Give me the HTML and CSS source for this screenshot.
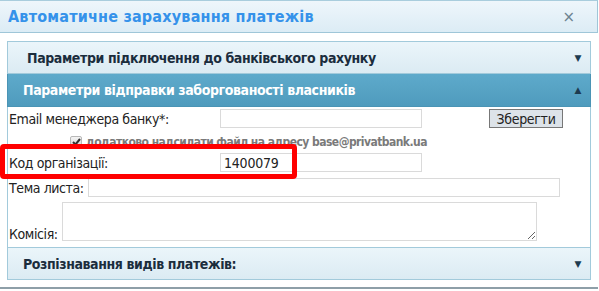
FILE: index.html
```html
<!DOCTYPE html>
<html lang="uk">
<head>
  <meta charset="UTF-8" />
  <title>Автоматичне зарахування платежів</title>
  <link rel="stylesheet" href="styles.css">
</head>
<body>
  <div class="dialog">
    <div class="dialog-title">
      <span class="dialog-title-text">Автоматичне зарахування платежів</span>
      <span class="dialog-close">&times;</span>
    </div>
    <div class="accordion">
      <div class="acc-header acc-header-first">
        <span>Параметри підключення до банківського рахунку</span>
        <span class="acc-arrow">&#9660;</span>
      </div>
      <div class="acc-header acc-header-active">
        <span>Параметри відправки заборгованості власників</span>
        <span class="acc-arrow">&#9650;</span>
      </div>
      <div class="acc-content">
        <div class="form-row row-email">
          <label class="form-label label-wide">Email менеджера банку*:</label>
          <input class="text-input input-short" type="text" />
          <button class="save-btn">Зберегти</button>
        </div>
        <div class="form-row row-check">
          <span class="fake-check">
            <svg width="9" height="8" viewBox="0 0 9 8"><path d="M1 4 L3.5 6.5 L8 1" stroke="#333" stroke-width="2" fill="none"/></svg>
          </span>
          <span class="check-text">додатково надсилати файл на адресу base@privatbank.ua</span>
        </div>
        <div class="form-row row-code">
          <label class="form-label label-wide">Код організації:</label>
          <input class="text-input input-short" type="text" value="1400079" />
        </div>
        <div class="form-row row-subject">
          <label class="form-label">Тема листа:</label>
          <input class="text-input input-subject" type="text" />
        </div>
        <div class="form-row row-fee">
          <label class="form-label">Комісія:</label>
          <textarea class="text-area"></textarea>
        </div>
      </div>
      <div class="acc-header">
        <span>Розпізнавання видів платежів:</span>
        <span class="acc-arrow">&#9660;</span>
      </div>
    </div>
    <div class="highlight-box"></div>
  </div>
</body>
</html>
```

FILE: styles.css
```css
body {
  margin: 0;
  background: #fff;
  font-family: 'DejaVu Sans Condensed', 'DejaVu Sans', sans-serif;
}
.dialog {
  position: relative;
  width: 598px;
  height: 287px;
  border-bottom: 2px solid #8e9fa8;
  background: #fff;
}
.dialog-title {
  display: flex;
  align-items: center;
  justify-content: space-between;
  height: 31px;
  border-top: 1px solid #a9cddd;
  border-bottom: 1px solid #9fc6d8;
  border-right: 1px solid #9fc6d8;
  background: linear-gradient(to bottom, #eef6fb 0%, #dcecf5 100%);
  padding: 0 22px 0 8px;
}
.dialog-title-text {
  font-size: 16px;
  font-weight: bold;
  letter-spacing: 0.2px;
  color: #3592ea;
}
.dialog-close {
  font-family: 'DejaVu Sans', sans-serif;
  font-size: 15px;
  color: #6d8391;
}
.accordion {
  margin: 8px 0 0 7px;
  width: 584px;
}
.acc-header {
  display: flex;
  align-items: center;
  justify-content: space-between;
  height: 31px;
  padding: 0 9px 0 15px;
  border: 1px solid #a2cadb;
  background: linear-gradient(to bottom, #ebf5fa 0%, #dbebf3 100%);
  font-size: 14px;
  font-weight: bold;
  letter-spacing: -0.4px;
  color: #1b2d3d;
}
.acc-header-first {
  padding-left: 19px;
}
.acc-header-active {
  border-top: 0;
  height: 32px;
  background: linear-gradient(to bottom, #5eaacb 0%, #4f9bbd 100%);
  border-color: #4a94b5;
  color: #fff;
}
.acc-arrow {
  font-family: 'DejaVu Sans', sans-serif;
  font-size: 9px;
  color: #1d3b50;
}
.acc-content {
  height: 140px;
  padding: 2px 0 0 1px;
  box-sizing: border-box;
  border-left: 1px solid #a2cadb;
  border-right: 1px solid #a2cadb;
  background: #fff;
}
.form-row {
  display: flex;
  align-items: center;
}
.form-label {
  font-size: 14px;
  letter-spacing: -0.4px;
  color: #222;
  white-space: nowrap;
  margin-right: 4px;
}
.label-wide {
  width: 207px;
}
.text-input {
  height: 19px;
  box-sizing: border-box;
  border: 1px solid #dadada;
  padding: 0 3px;
  font-family: 'DejaVu Sans Condensed', 'DejaVu Sans', sans-serif;
  font-size: 14px;
  letter-spacing: -0.2px;
  color: #222;
  outline: none;
}
.input-short {
  width: 202px;
}
.input-subject {
  width: 472px;
}
.save-btn {
  margin-left: 67px;
  width: 74px;
  height: 19px;
  padding: 0;
  border: 1px solid #777;
  border-radius: 0;
  background: #dde3e9;
  font-family: 'DejaVu Sans Condensed', 'DejaVu Sans', sans-serif;
  font-size: 14px;
  letter-spacing: -0.3px;
  color: #222;
}
.row-check {
  height: 25px;
  padding-left: 61px;
  padding-top: 2px;
  box-sizing: border-box;
}
.fake-check {
  display: flex;
  align-items: center;
  justify-content: center;
  width: 10px;
  height: 10px;
  border: 1px solid #b8b8b8;
  border-radius: 2px;
  background: linear-gradient(to bottom, #f4f4f4, #d6d6d6);
  margin-right: 4px;
}
.check-text {
  font-size: 12px;
  font-weight: bold;
  letter-spacing: -0.55px;
  color: #7a7a7a;
}
.row-subject {
  margin-top: 6px;
}
.row-fee {
  margin-top: 5px;
  align-items: flex-end;
}
.row-fee .form-label {
  line-height: 14px;
}
.text-area {
  width: 475px;
  height: 39px;
  box-sizing: border-box;
  border: 1px solid #dadada;
  margin: 0;
  resize: both;
  outline: none;
}
.highlight-box {
  position: absolute;
  left: 0;
  top: 144px;
  width: 297px;
  height: 35px;
  box-sizing: border-box;
  border: 5px solid #ff0000;
  border-radius: 4px;
}
```
